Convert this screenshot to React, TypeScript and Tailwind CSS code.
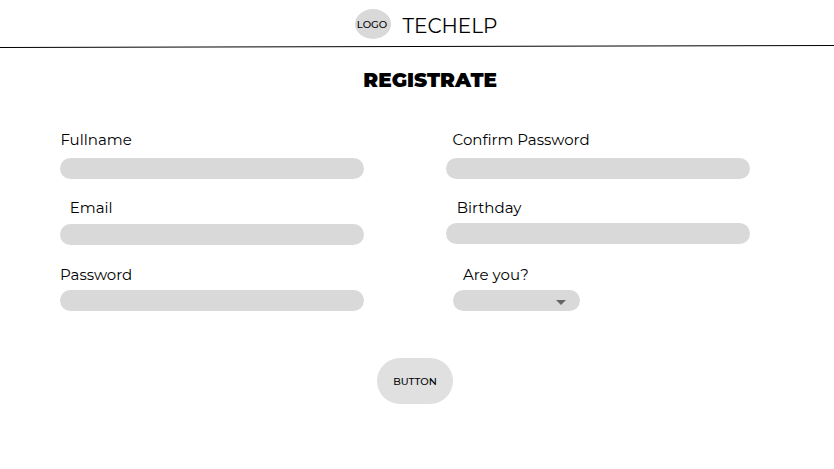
import React from "react";

type FieldProps = { id: string; label: string; type?: string; labelClass: string; inputClass: string };

function Field({ id, label, type = "text", labelClass, inputClass }: FieldProps) {
  return (
    <>
      <label htmlFor={id} className={`block h-5 whitespace-nowrap text-[15px] leading-5 ${labelClass}`}>
        {label}
      </label>
      <input
        id={id}
        type={type}
        className={`block h-[21px] w-full rounded-full bg-[#d9d9d9] px-3 text-sm outline-none ${inputClass}`}
      />
    </>
  );
}

export default function App() {
  return (
    <main className="h-[469px] w-[834px] overflow-hidden bg-white font-[Montserrat,Inter,sans-serif] text-black">
      <header className="flex h-[49px] flex-col">
        <div className="flex h-[44px] pl-[355px] pt-[9px]">
          <div className="flex h-[30px] w-9 items-center justify-center rounded-[50%] bg-[#d9d9d9] pr-[2px] pt-[2px] text-[10px] font-medium leading-[28px]">
            LOGO
          </div>
          <span className="ml-[11.6px] mt-[3px] whitespace-nowrap text-[20px] leading-7">TECHELP</span>
        </div>
        <svg width="834" height="5" className="block">
          <path d="M0 3.5L834 1.5" stroke="black" />
        </svg>
      </header>
      <h1 className="h-10 pl-[363.3px] pt-[17px] text-[20px] font-black leading-7">REGISTRATE</h1>
      <form className="flex gap-[82px] pl-[60px] pt-[41px]">
        <div className="w-[304px]">
          <Field id="fullname" label="Fullname" labelClass="ml-[0.4px]" inputClass="mt-2" />
          <Field id="email" label="Email" type="email" labelClass="ml-[9.7px] mt-[19px]" inputClass="mt-[6px]" />
          <Field id="password" label="Password" type="password" labelClass="mt-5" inputClass="mt-[5px]" />
        </div>
        <div className="w-[304px]">
          <Field id="confirm" label="Confirm Password" type="password" labelClass="ml-[6.6px]" inputClass="mt-2" />
          <Field id="birthday" label="Birthday" labelClass="ml-[10.7px] mt-[19px]" inputClass="mt-[5px]" />
          <span className="ml-[17px] mt-[21px] block h-5 whitespace-nowrap text-[15px] leading-5">Are you?</span>
          <div className="ml-[7px] mt-[5px] flex h-[21px] w-[127px] items-center justify-end rounded-full bg-[#d9d9d9] pr-[14px]">
            <svg width="10" height="5" className="mt-1">
              <path d="M0 0H10L5 5Z" fill="#666" />
            </svg>
          </div>
        </div>
      </form>
      <button className="ml-[377px] mt-[47px] flex h-[46px] w-[76px] items-center justify-center rounded-full bg-[#e0e0e0] text-[10px] font-medium">
        BUTTON
      </button>
    </main>
  );
}
